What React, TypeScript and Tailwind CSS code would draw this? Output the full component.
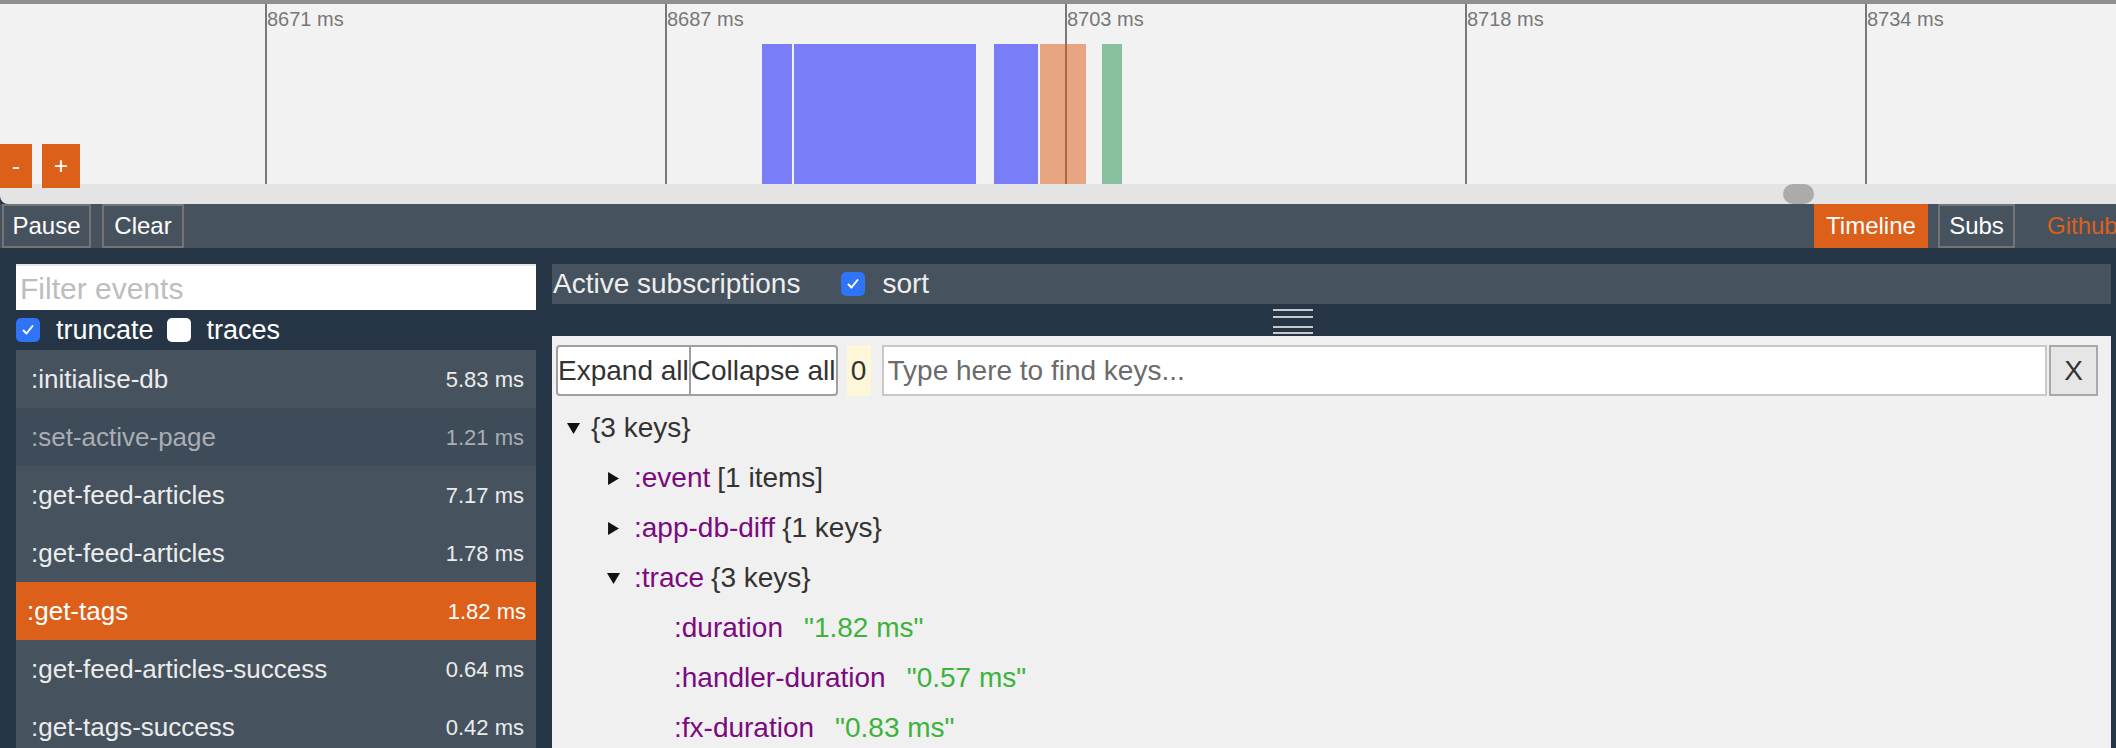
import React from 'react'

const ticks = [
  { x: 265, label: '8671 ms' },
  { x: 665, label: '8687 ms' },
  { x: 1065, label: '8703 ms' },
  { x: 1465, label: '8718 ms' },
  { x: 1865, label: '8734 ms' },
]

const events = [
  { name: ':initialise-db', time: '5.83 ms', tone: 'light' },
  { name: ':set-active-page', time: '1.21 ms', tone: 'dim' },
  { name: ':get-feed-articles', time: '7.17 ms', tone: 'light' },
  { name: ':get-feed-articles', time: '1.78 ms', tone: 'light' },
  { name: ':get-tags', time: '1.82 ms', tone: 'selected' },
  { name: ':get-feed-articles-success', time: '0.64 ms', tone: 'light' },
  { name: ':get-tags-success', time: '0.42 ms', tone: 'light' },
]

function Check({ on }: { on: boolean }) {
  if (!on) return <span className="block w-[24px] h-[24px] rounded-[5px] bg-white shrink-0" />
  return (
    <span className="w-[24px] h-[24px] rounded-[5px] bg-[#2f74f6] shrink-0 flex items-center justify-center">
      <svg width="14" height="14" viewBox="0 0 14 14">
        <path d="M2.5 7.5 L5.5 10.5 L11.5 3" stroke="white" strokeWidth="2" fill="none" strokeLinecap="round" strokeLinejoin="round" />
      </svg>
    </span>
  )
}

function Tri({ open }: { open: boolean }) {
  return open ? (
    <svg width="13" height="13" viewBox="0 0 12 12" className="shrink-0">
      <polygon points="0,1 12,1 6,11" fill="#111" />
    </svg>
  ) : (
    <svg width="13" height="13" viewBox="0 0 12 12" className="shrink-0">
      <polygon points="1,0 11,6 1,12" fill="#111" />
    </svg>
  )
}

export default function App() {
  return (
    <div className="w-[2116px] h-[748px] overflow-hidden bg-[#263545] font-['Liberation_Sans',Arial,sans-serif]">
      <div className="h-[4px] bg-[#8f8f8f]" />

      {/* timeline canvas */}
      <div className="relative h-[180px] bg-[#f2f2f2]">
        {ticks.map((t) => (
          <div key={t.x} className="absolute top-0 bottom-0 w-[2px] bg-[#787878]" style={{ left: t.x }}>
            <span className="absolute left-[2px] top-[3px] text-[20px] leading-[24px] text-[#777] whitespace-nowrap">{t.label}</span>
          </div>
        ))}
        <div className="absolute top-[40px] h-[140px] left-[762px] w-[30px] bg-[#7a7ef8]" />
        <div className="absolute top-[40px] h-[140px] left-[794px] w-[182px] bg-[#7a7ef8]" />
        <div className="absolute top-[40px] h-[140px] left-[994px] w-[44px] bg-[#7a7ef8]" />
        <div className="absolute top-[40px] h-[140px] left-[1040px] w-[46px] bg-[#dd5811]/50" />
        <div className="absolute top-[40px] h-[140px] left-[1102px] w-[20px] bg-[#89c09e]" />
        <div className="absolute left-0 top-[140px] flex gap-[10px] z-10">
          <button className="w-[32px] h-[44px] bg-[#dc5f1a] text-white text-[24px] leading-none">-</button>
          <button className="w-[38px] h-[44px] bg-[#dc5f1a] text-white text-[24px] leading-none">+</button>
        </div>
      </div>

      {/* scroll track */}
      <div className="relative h-[20px] bg-[#e4e4e4] rounded-bl-[8px]">
        <div className="absolute left-[1783px] top-0 w-[31px] h-[20px] rounded-full bg-[#ababab]" />
      </div>

      {/* toolbar */}
      <div className="h-[44px] bg-[#46535f] flex items-stretch text-white text-[24px]">
        <button className="ml-[2px] w-[89px] border-2 border-[#747474] text-white">Pause</button>
        <button className="ml-[11px] w-[82px] border-2 border-[#747474] text-white">Clear</button>
        <div className="ml-auto flex items-stretch">
          <button className="w-[114px] bg-[#dc5f1a] text-white">Timeline</button>
          <button className="ml-[10px] w-[77px] border-2 border-[#747474] text-white">Subs</button>
          <span className="ml-[32px] w-[69px] overflow-hidden whitespace-nowrap flex items-center text-[#dc5f1a]">Github</span>
        </div>
      </div>

      <div className="flex">
        {/* events */}
        <div className="w-[552px] shrink-0 pl-[16px] pr-[16px] pt-[16px]">
          <div className="h-[46px] bg-white border-t-2 border-[#e6e6e6] flex items-center pl-[4px] text-[30px] text-[#bdbdbd]">Filter events</div>
          <div className="h-[24px] mt-[8px] flex items-center text-[27px] text-white">
            <Check on />
            <span className="ml-[16px]">truncate</span>
            <span className="ml-[13px]"><Check on={false} /></span>
            <span className="ml-[16px]">traces</span>
          </div>
          <div className="mt-[8px]">
            {events.map((e, i) => {
              const bg = e.tone === 'selected' ? 'bg-[#dc5f1a]' : e.tone === 'dim' ? 'bg-[#3e4b59]' : 'bg-[#46535f]'
              const fg = e.tone === 'dim' ? 'text-[#a9aeb4]' : e.tone === 'selected' ? 'text-white' : 'text-[#ececec]'
              const pad = e.tone === 'selected' ? 'pl-[11px] pr-[10px]' : 'pl-[15px] pr-[12px]'
              return (
                <div key={i} className={`h-[58px] flex items-center justify-between ${bg} ${fg} ${pad}`}>
                  <span className="text-[26px]">{e.name}</span>
                  <span className="text-[22px]">{e.time}</span>
                </div>
              )
            })}
          </div>
        </div>

        {/* subscriptions / data */}
        <div className="flex-1 mr-[5px] pt-[16px]">
          <div className="h-[40px] bg-[#46535f] flex items-center text-[28px] text-[#eeeeee] pl-[1px]">
            <span>Active subscriptions</span>
            <span className="ml-[41px]"><Check on /></span>
            <span className="ml-[17px]">sort</span>
          </div>
          <div className="h-[32px] flex flex-col items-center justify-center">
            <div className="ml-[-78px] flex flex-col">
              <div className="w-[40px] h-[2px] bg-[#c8c8c8] mt-[2px]" />
              <div className="w-[40px] h-[2px] bg-[#c8c8c8] mt-[5px]" />
              <div className="w-[40px] h-[2px] bg-[#c8c8c8] mt-[8px]" />
              <div className="w-[40px] h-[2px] bg-[#c8c8c8] mt-[4px]" />
            </div>
          </div>
          <div className="h-[420px] bg-[#f0f0f0] pt-[9px]">
            <div className="flex items-stretch h-[51px] pl-[4px] text-[28px]">
              <div className="flex border-2 border-[#a0a0a0] rounded-[4px] bg-white text-[#333]">
                <span className="flex items-center whitespace-nowrap">Expand all</span>
                <span className="border-l-2 border-[#a0a0a0] flex items-center whitespace-nowrap">Collapse all</span>
              </div>
              <div className="ml-[9px] w-[24px] bg-[#fdf6d9] flex items-center justify-center text-[#333]">0</div>
              <div className="ml-[11px] flex-1 bg-white border-2 border-[#c8c8c8] flex items-center pl-[4px] text-[#6b6b6b]">Type here to find keys...</div>
              <div className="ml-[2px] w-[49px] bg-[#e6e6e6] border-2 border-[#a9a9a9] flex items-center justify-center text-[#333]">X</div>
              <div className="w-[13px]" />
            </div>

            <div className="mt-[7px] text-[28px] text-[#333]">
              <div className="h-[50px] flex items-center pl-[15px]">
                <Tri open />
                <span className="ml-[11px]">{'{3 keys}'}</span>
              </div>
              <div className="h-[50px] flex items-center pl-[55px]">
                <Tri open={false} />
                <span className="ml-[14px] text-[#7b0a7e]">:event</span>
                <span className="ml-[7px]">[1 items]</span>
              </div>
              <div className="h-[50px] flex items-center pl-[55px]">
                <Tri open={false} />
                <span className="ml-[14px] text-[#7b0a7e]">:app-db-diff</span>
                <span className="ml-[7px]">{'{1 keys}'}</span>
              </div>
              <div className="h-[50px] flex items-center pl-[55px]">
                <Tri open />
                <span className="ml-[14px] text-[#7b0a7e]">:trace</span>
                <span className="ml-[7px]">{'{3 keys}'}</span>
              </div>
              <div className="h-[50px] flex items-center pl-[122px]">
                <span className="text-[#7b0a7e]">:duration</span>
                <span className="ml-[21px] text-[#3db33d]">"1.82 ms"</span>
              </div>
              <div className="h-[50px] flex items-center pl-[122px]">
                <span className="text-[#7b0a7e]">:handler-duration</span>
                <span className="ml-[21px] text-[#3db33d]">"0.57 ms"</span>
              </div>
              <div className="h-[50px] flex items-center pl-[122px]">
                <span className="text-[#7b0a7e]">:fx-duration</span>
                <span className="ml-[21px] text-[#3db33d]">"0.83 ms"</span>
              </div>
            </div>
          </div>
        </div>
      </div>
    </div>
  )
}
